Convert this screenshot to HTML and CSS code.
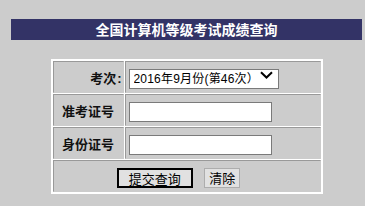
FILE: index.html
```html
<!DOCTYPE html>
<html lang="zh-CN">
<head>
    <meta charset="UTF-8">
    <title>全国计算机等级考试成绩查询</title>
    <link rel="stylesheet" href="styles.css">
</head>
<body>
    <div class="page">
        <div class="title">全国计算机等级考试成绩查询</div>
        <form class="query">
            <table class="query-table">
                <tr>
                    <td class="label right">考次<span class="colon">:</span></td>
                    <td class="field">
                        <span class="select-wrap">
                            <select class="select">
                                <option>2016年9月份(第46次）</option>
                            </select>
                            <svg class="chevron" width="13" height="8" viewBox="0 0 13 8"><path d="M1 1.2 L6.5 6.5 L12 1.2" fill="none" stroke="#000" stroke-width="2"/></svg>
                        </span>
                    </td>
                </tr>
                <tr>
                    <td class="label">准考证号</td>
                    <td class="field"><input class="text" type="text"></td>
                </tr>
                <tr>
                    <td class="label">身份证号</td>
                    <td class="field"><input class="text" type="text"></td>
                </tr>
                <tr>
                    <td class="buttons" colspan="2">
                        <button class="btn btn-default" type="button">提交查询</button>
                        <button class="btn" type="button">清除</button>
                    </td>
                </tr>
            </table>
        </form>
    </div>
</body>
</html>
```

FILE: styles.css
```css
body {
    margin: 0;
    background: #cccccc;
    font-family: "Noto Sans CJK SC", "Liberation Sans", sans-serif;
}
.page {
    width: 351px;
    padding: 19px 0 0 11px;
}
.title {
    height: 21px;
    line-height: 21px;
    background: #333366;
    color: #ffffff;
    font-size: 14px;
    font-weight: bold;
    text-align: center;
}
.query {
    margin: 19px 0 0 0;
}
.query-table {
    margin: 0 auto;
    width: 272px;
    border: 1px solid #ffffff;
    border-spacing: 1px;
    background: #ffffff;
}
.query-table td {
    background: #cccccc;
    border: 1px solid #999999;
    border-right-color: #cccccc;
    border-bottom-color: #cccccc;
    height: 30px;
    padding: 0;
}
.label {
    width: 68px;
    font-size: 13px;
    font-weight: bold;
    color: #111;
    text-align: center;
}
.label.right {
    text-align: right;
    padding-right: 1px !important;
}
.colon {
    font-family: "Liberation Sans", sans-serif;
    margin-left: 1px;
}
.field {
    padding-left: 3px !important;
}
.select-wrap {
    position: relative;
    display: inline-block;
}
.select {
    -webkit-appearance: none;
    appearance: none;
    width: 150px;
    height: 20px;
    margin: 0;
    padding: 0 0 0 4px;
    border: 1px solid #7a7a7a;
    border-radius: 0;
    background: #ffffff;
    font-family: "Liberation Sans", "Noto Sans CJK SC", sans-serif;
    font-size: 12px;
    letter-spacing: 0.2px;
    color: #000;
    vertical-align: middle;
}
.chevron {
    position: absolute;
    right: 6px;
    top: 6px;
    pointer-events: none;
}
.text {
    width: 143px;
    height: 20px;
    margin: 0;
    padding: 0 2px;
    box-sizing: border-box;
    border: 1px solid #7a7a7a;
    background: #ffffff;
    vertical-align: middle;
}
.buttons {
    text-align: center;
    padding-right: 16px !important;
    height: 30px !important;
}
.btn {
    height: 20px;
    margin: 0 3px;
    padding: 0 4px;
    border: 1px solid #adadad;
    background: #e1e1e1;
    font-family: "Noto Sans CJK SC", sans-serif;
    font-size: 13px;
    line-height: 18px;
    color: #000;
    vertical-align: middle;
}
.btn-default {
    width: 76px;
    border: 2px solid #000000;
    margin-right: 5px;
}
```
